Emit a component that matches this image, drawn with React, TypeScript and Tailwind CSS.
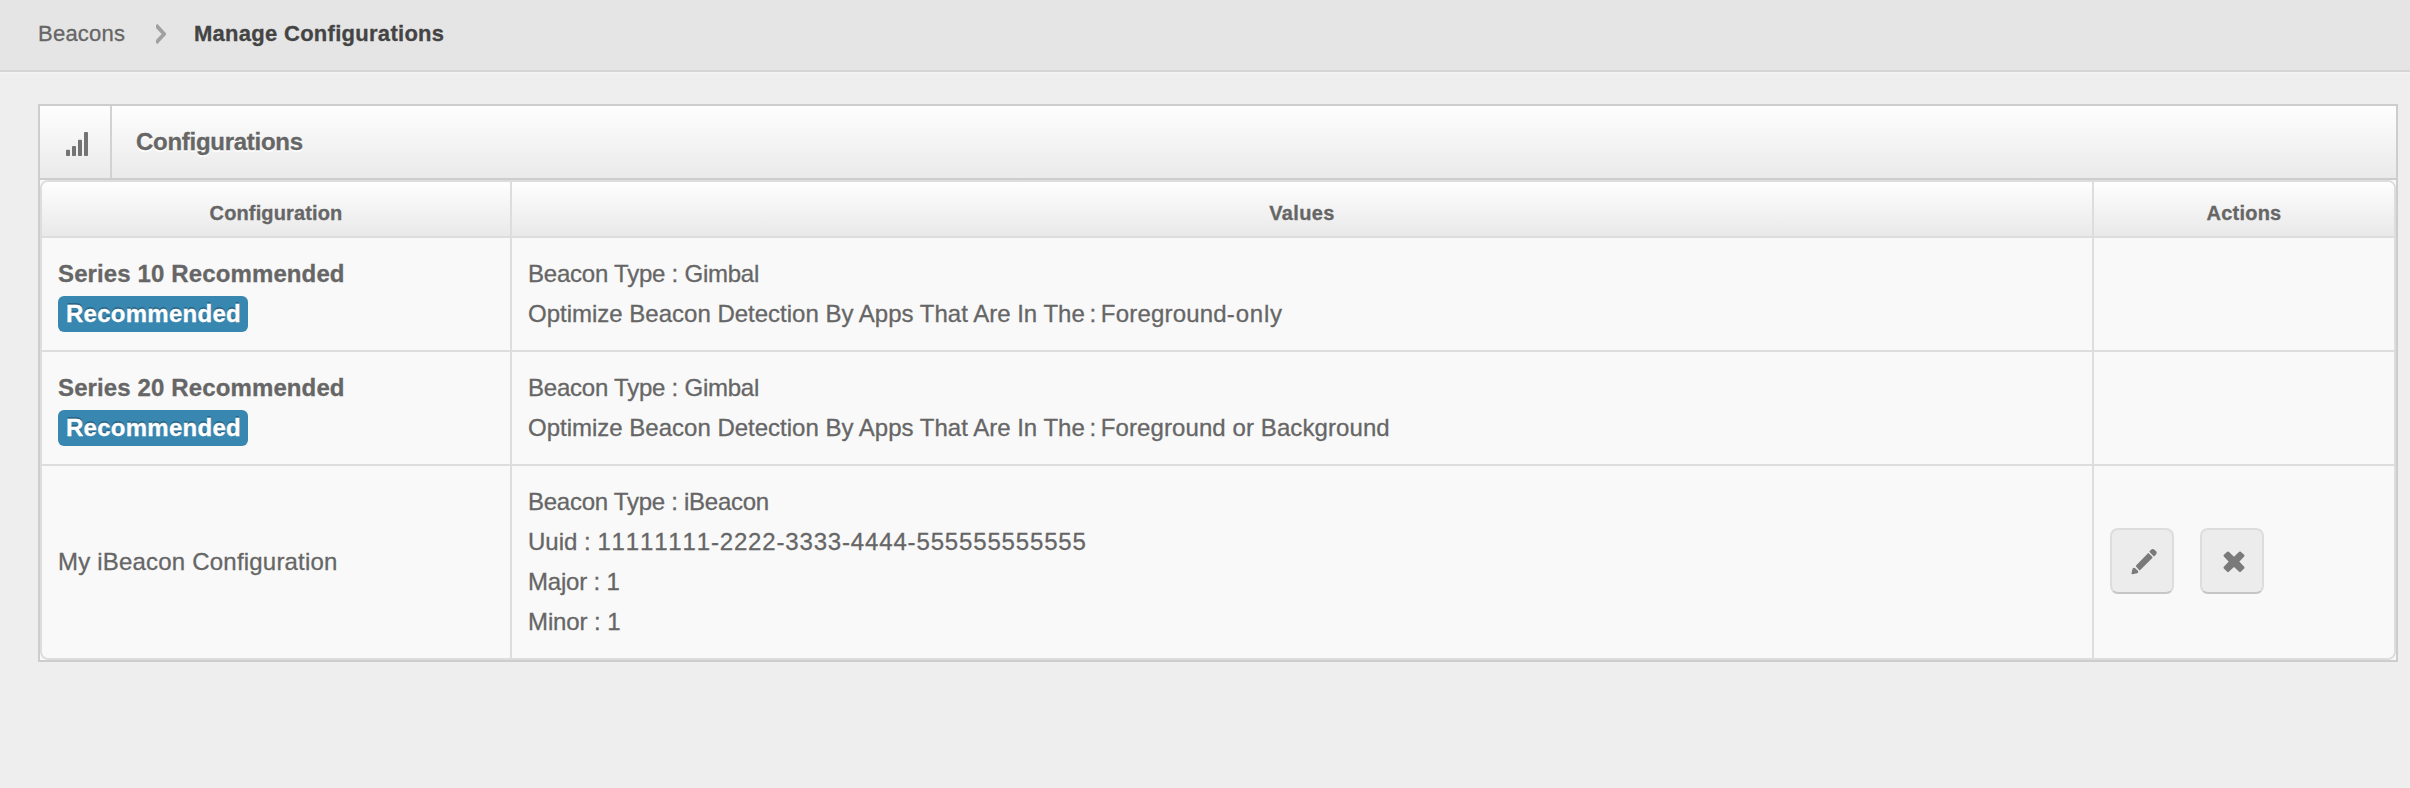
import type { ReactNode } from 'react';

function ChevronIcon() {
  return (
    <svg className="ml-[30px] mr-[28px] mt-6 h-5 w-[10px] shrink-0" viewBox="0 0 10 20" fill="none">
      <path d="M0 1.2 8.2 10 0 18.8" stroke="#a0a0a0" strokeWidth="3.8" />
    </svg>
  );
}

function SignalIcon() {
  return (
    <svg className="h-6 w-[22px]" viewBox="0 0 22 24" fill="#747474">
      <rect x="0" y="17.7" width="4" height="6.3" rx="0.8" />
      <rect x="6" y="14" width="4" height="10" rx="0.8" />
      <rect x="12" y="7.8" width="4" height="16.2" rx="0.8" />
      <rect x="18" y="0" width="4" height="24" rx="0.8" />
    </svg>
  );
}

function PencilIcon() {
  return (
    <svg className="ml-[19px] mt-[18px] h-[28px] w-[27px]" viewBox="93 84 81 84" fill="#7a7a7a" stroke="#7a7a7a" strokeWidth="5" strokeLinejoin="round">
      <path d="M110 138 145 102 155 112 119 148Z" />
      <path d="M151 95 155 91Q158 88 162 91L167 96Q169 99 166 102L162 106Z" />
      <path d="M97 160 100 147Q101 145 103 146L112 154Q113 156 111 157Z" />
    </svg>
  );
}

function RemoveIcon() {
  return (
    <svg className="ml-[19px] mt-[18px] h-[28px] w-[28px]" viewBox="363 84 84 84" fill="#7a7a7a" stroke="#7a7a7a" strokeWidth="7" strokeLinejoin="round">
      <path d="M384 98 402 115 420 98 430 107 413 125 430 143 420 153 402 136 384 153 374 143 391 125 374 107Z" />
    </svg>
  );
}

function IconButton({ label, children }: { label: string; children: ReactNode }) {
  return (
    <button
      aria-label={label}
      className="flex h-[66px] w-16 items-start rounded-[8px] border-2 border-[#dddddd] border-b-[#c6c6c6] bg-[#ececec]"
    >
      {children}
    </button>
  );
}

function RecommendedName({ name }: { name: string }) {
  return (
    <div className="flex flex-col items-start pb-[2px]">
      <div className="font-bold tracking-[0.12px]">{name}</div>
      <div className="mt-[2px] h-9 w-[190px] rounded-[6px] bg-[#3887b0] pl-[8px] font-bold leading-[35px] tracking-[0.26px] text-white [text-shadow:0_-2px_0_rgba(0,0,0,0.25)]">
        Recommended
      </div>
    </div>
  );
}

function Row({ name, actions, last, children }: { name: ReactNode; actions?: ReactNode; last?: boolean; children: ReactNode }) {
  return (
    <div className={`grid grid-cols-[470px_1582px_300px] ${last ? '' : 'border-b-2 border-[#dddddd]'}`}>
      <div className="flex items-center border-r-2 border-[#dddddd] px-4 py-4">{name}</div>
      <div className="border-r-2 border-[#dddddd] py-4 pl-4">{children}</div>
      <div className="flex items-center gap-[26px] pb-[2px] pl-4">{actions}</div>
    </div>
  );
}

export default function App() {
  return (
    <div className="h-[788px] w-[2410px] overflow-hidden bg-[#eeeeee] font-['Liberation_Sans',Arial,sans-serif] text-[24px] leading-[40px] text-[#666666] [-webkit-text-stroke:0.3px]">
      <nav className="flex h-[72px] border-b-2 border-[#d5d5d5] bg-[#e5e5e5] text-[22px] leading-[68px] shadow-[0_2px_0_#f2f2f2]">
        <span className="ml-[38px] w-[88px] whitespace-nowrap tracking-[0.24px]">Beacons</span>
        <ChevronIcon />
        <span className="whitespace-nowrap font-bold tracking-[0.28px] text-[#444444]">Manage Configurations</span>
      </nav>

      <main className="ml-[38px] mt-8 w-[2360px] border-2 border-[#cdcdcd] bg-[#f9f9f9]">
        <header className="flex h-[74px] border-b-2 border-[#cdcdcd] bg-linear-to-b from-[#fefefe] to-[#eaeaea]">
          <div className="w-[72px] border-r-2 border-[#d2d2d2] pl-[26px] pt-[26px]">
            <SignalIcon />
          </div>
          <h1 className="pl-6 font-bold leading-[71px] tracking-[-0.28px] [text-shadow:0_2px_0_#ffffff]">Configurations</h1>
        </header>

        <section className="overflow-hidden rounded-[8px] border-2 border-[#dddddd]">
          <div className="grid h-14 grid-cols-[470px_1582px_300px] border-b-2 border-[#dddddd] bg-linear-to-b from-[#fefefe] to-[#e9e9e9] text-center text-[20px] font-bold leading-[62px]">
            <div className="h-[54px] border-r-2 border-[#dddddd] tracking-[0.14px]">Configuration</div>
            <div className="h-[54px] border-r-2 border-[#dddddd] tracking-[0.35px]">Values</div>
            <div className="h-[54px] tracking-[0.21px]">Actions</div>
          </div>

          <Row name={<RecommendedName name="Series 10 Recommended" />}>
            <div className="tracking-[-0.23px]">Beacon Type : Gimbal</div>
            <div>
              Optimize Beacon Detection By Apps That Are In The<span className="[word-spacing:-2px]"> : </span>
              <span className="tracking-[0.2px]">Foreground</span>
              <span className="tracking-[0.8px]">-only</span>
            </div>
          </Row>
          <Row name={<RecommendedName name="Series 20 Recommended" />}>
            <div className="tracking-[-0.23px]">Beacon Type : Gimbal</div>
            <div>
              Optimize Beacon Detection By Apps That Are In The<span className="[word-spacing:-2px]"> : </span>
              <span className="tracking-[0.09px]">Foreground or Background</span>
            </div>
          </Row>
          <Row
            last
            name={<div className="tracking-[0.2px]">My iBeacon Configuration</div>}
            actions={
              <>
                <IconButton label="Edit">
                  <PencilIcon />
                </IconButton>
                <IconButton label="Delete">
                  <RemoveIcon />
                </IconButton>
              </>
            }
          >
            <div className="tracking-[-0.26px]">Beacon Type : iBeacon</div>
            <div>
              Uuid : <span className="tracking-[0.84px] [font-kerning:none]">11111111-2222-3333-4444-555555555555</span>
            </div>
            <div className="tracking-[-0.2px]">Major : 1</div>
            <div className="tracking-[-0.1px]">Minor : 1</div>
          </Row>
        </section>
      </main>
    </div>
  );
}
